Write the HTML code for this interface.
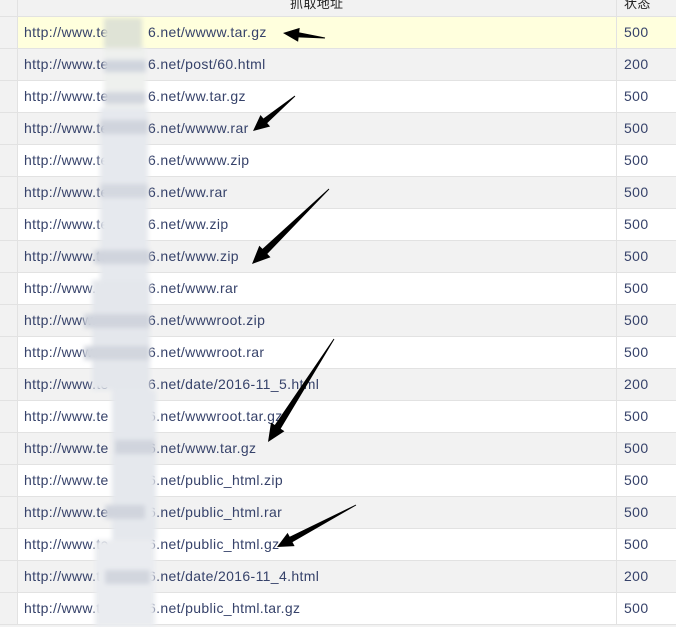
<!DOCTYPE html>
<html><head><meta charset="utf-8"><style>
html,body{margin:0;padding:0;width:676px;height:627px;overflow:hidden;background:#f2f2f2;font-family:"Liberation Sans","Noto Sans CJK SC",sans-serif;}
.row{position:absolute;left:0;width:676px;height:31px;border-bottom:1px solid #e2e2e2;}
.c0{position:absolute;left:0;top:0;width:17px;height:31px;background:#f2f2f2;border-right:1px solid #e2e2e2;}
.u{position:absolute;left:24px;top:7px;font-size:14px;letter-spacing:0.35px;color:#36426a;white-space:nowrap;}
.s{position:absolute;left:616px;top:0;width:60px;height:31px;border-left:1px solid #e2e2e2;}
.s span{position:absolute;left:7px;top:7px;font-size:14px;letter-spacing:0.4px;color:#36426a;}
</style></head><body>
<div class="row" style="top:-15px;background:#f2f2f2"><div class="c0"></div><div class="u" style="left:290px;top:8px;color:#222;font-size:13px">抓取地址</div><div class="s"><span style="color:#222;font-size:13px;top:8px">状态</span></div></div>
<div id="t"></div>
<svg id="sv" style="position:absolute;left:0;top:0" width="676" height="627">
<defs><filter id="b"><feGaussianBlur stdDeviation="2.5"/></filter></defs>
<g filter="url(#b)">
<rect x="104" y="18" width="38" height="30" fill="#dfe3d6"/>
<rect x="104" y="48" width="42" height="60" fill="#eef0ee"/>
<rect x="104" y="60" width="42" height="12" fill="#cfd4dd"/>
<rect x="104" y="92" width="42" height="12" fill="#d2d6de"/>
<rect x="100" y="108" width="48" height="180" fill="#e6e9ee"/>
<rect x="100" y="120" width="48" height="14" fill="#d0d4dd"/>
<rect x="100" y="184" width="48" height="14" fill="#d4d8e0"/>
<rect x="94" y="250" width="56" height="14" fill="#d0d4dd"/>
<rect x="92" y="280" width="58" height="110" fill="#e4e7ec"/>
<rect x="84" y="314" width="66" height="14" fill="#d0d4dd"/>
<rect x="84" y="346" width="66" height="14" fill="#d2d6de"/>
<rect x="112" y="390" width="44" height="150" fill="#e5e8ed"/>
<rect x="115" y="440" width="40" height="14" fill="#d0d4dd"/>
<rect x="105" y="505" width="40" height="14" fill="#d0d4dd"/>
<rect x="95" y="540" width="60" height="87" fill="#eaecf0"/>
<rect x="105" y="570" width="45" height="14" fill="#d2d6de"/>
</g>
<g id="ar" fill="#000"></g>
</svg>
<script>
var d=[["wwww.tar.gz","500"],["post/60.html","200"],["ww.tar.gz","500"],["wwww.rar","500"],["wwww.zip","500"],["ww.rar","500"],["ww.zip","500"],["www.zip","500"],["www.rar","500"],["wwwroot.zip","500"],["wwwroot.rar","500"],["date/2016-11_5.html","200"],["wwwroot.tar.gz","500"],["www.tar.gz","500"],["public_html.zip","500"],["public_html.rar","500"],["public_html.gz","500"],["date/2016-11_4.html","200"],["public_html.tar.gz","500"]];
var h="";
for(var i=0;i<d.length;i++){var bg=i==0?"#ffffdd":(i%2?"#f2f2f2":"#ffffff");
h+='<div class="row" style="top:'+(17+32*i)+'px;background:'+bg+'"><div class="c0"></div><div class="u">http://www.te</div><div class="u" style="left:148px">6.net/'+d[i][0]+'</div><div class="s"><span>'+d[i][1]+'</span></div></div>';}
document.getElementById("t").innerHTML=h;
function arrow(tx,ty,px,py,hl,sw,hw){var dx=px-tx,dy=py-ty,L=Math.sqrt(dx*dx+dy*dy),ux=dx/L,uy=dy/L,nx=-uy,ny=ux;
var bx=px-ux*hl,by=py-uy*hl;
var p=[[tx+nx*0.5,ty+ny*0.5],[bx+nx*sw,by+ny*sw],[bx+nx*hw,by+ny*hw],[px,py],[bx-nx*hw,by-ny*hw],[bx-nx*sw,by-ny*sw],[tx-nx*0.5,ty-ny*0.5]];
return '<polygon points="'+p.map(function(q){return q[0].toFixed(1)+","+q[1].toFixed(1)}).join(" ")+'"/>';}
document.getElementById("ar").innerHTML=
arrow(325,38,283,33,16,2.5,7)+
arrow(295,96,253,131,16,3,7.5)+
arrow(329,189,252,264,18,3.5,8)+
arrow(334,339,268,442,18,3.5,8)+
arrow(356,505,277,547,16,3,7.5);
</script>
</body></html>
